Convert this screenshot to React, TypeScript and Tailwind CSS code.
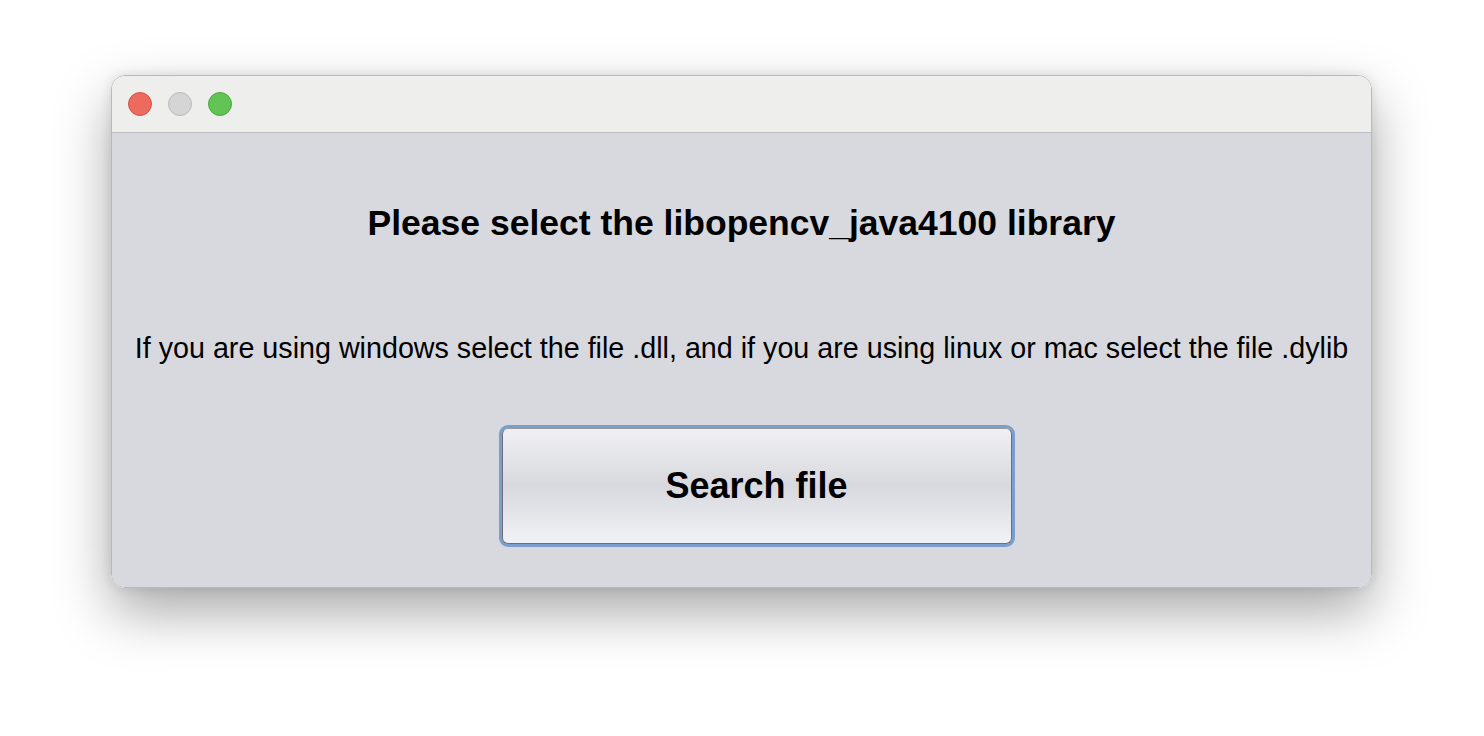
export default function App() {
  return (
    <div
      className="w-[1484px] h-[736px] bg-white pl-[111px] pt-[75px]"
      style={{ fontFamily: '"Liberation Sans", Arial, sans-serif' }}
    >
      <div className="w-[1261px] h-[513px] rounded-[14px] border border-[#b9b9bb] overflow-hidden shadow-[0_24px_55px_rgba(0,0,0,0.34),0_0_12px_rgba(0,0,0,0.1)] flex flex-col">
        {/* title bar */}
        <div className="h-[57px] bg-[#eeeeec] border-b border-[#bdbdbf] flex items-center gap-4 pl-[16px]">
          <span className="w-6 h-6 rounded-full bg-[#ed6a5e] border border-[#d25446]" />
          <span className="w-6 h-6 rounded-full bg-[#d5d5d5] border border-[#bbbbbb]" />
          <span className="w-6 h-6 rounded-full bg-[#61c454] border border-[#4ea73f]" />
        </div>

        {/* content */}
        <div className="flex-1 bg-[#d8d9de] flex flex-col items-center">
          <h1 className="mt-[70px] text-[35.5px] leading-[40px] font-bold text-black">
            Please select the libopencv_java4100 library
          </h1>
          <p className="mt-[90px] text-[28.7px] leading-[30px] text-black">
            If you are using windows select the file .dll, and if you are using linux or mac select the file .dylib
          </p>
          <div className="mt-[62px] ml-[30px] rounded-[9px] border-[3px] border-[#7a9ecf]">
            <button className="w-[510px] h-[116px] rounded-[6px] border border-[#6f6f73] border-t-[#9a9a9e] bg-gradient-to-b from-[#f0f0f3] via-[#d8d9de] to-[#f1f2f6] text-[36px] font-bold text-black flex items-center justify-center">
              Search file
            </button>
          </div>
        </div>
      </div>
    </div>
  );
}
